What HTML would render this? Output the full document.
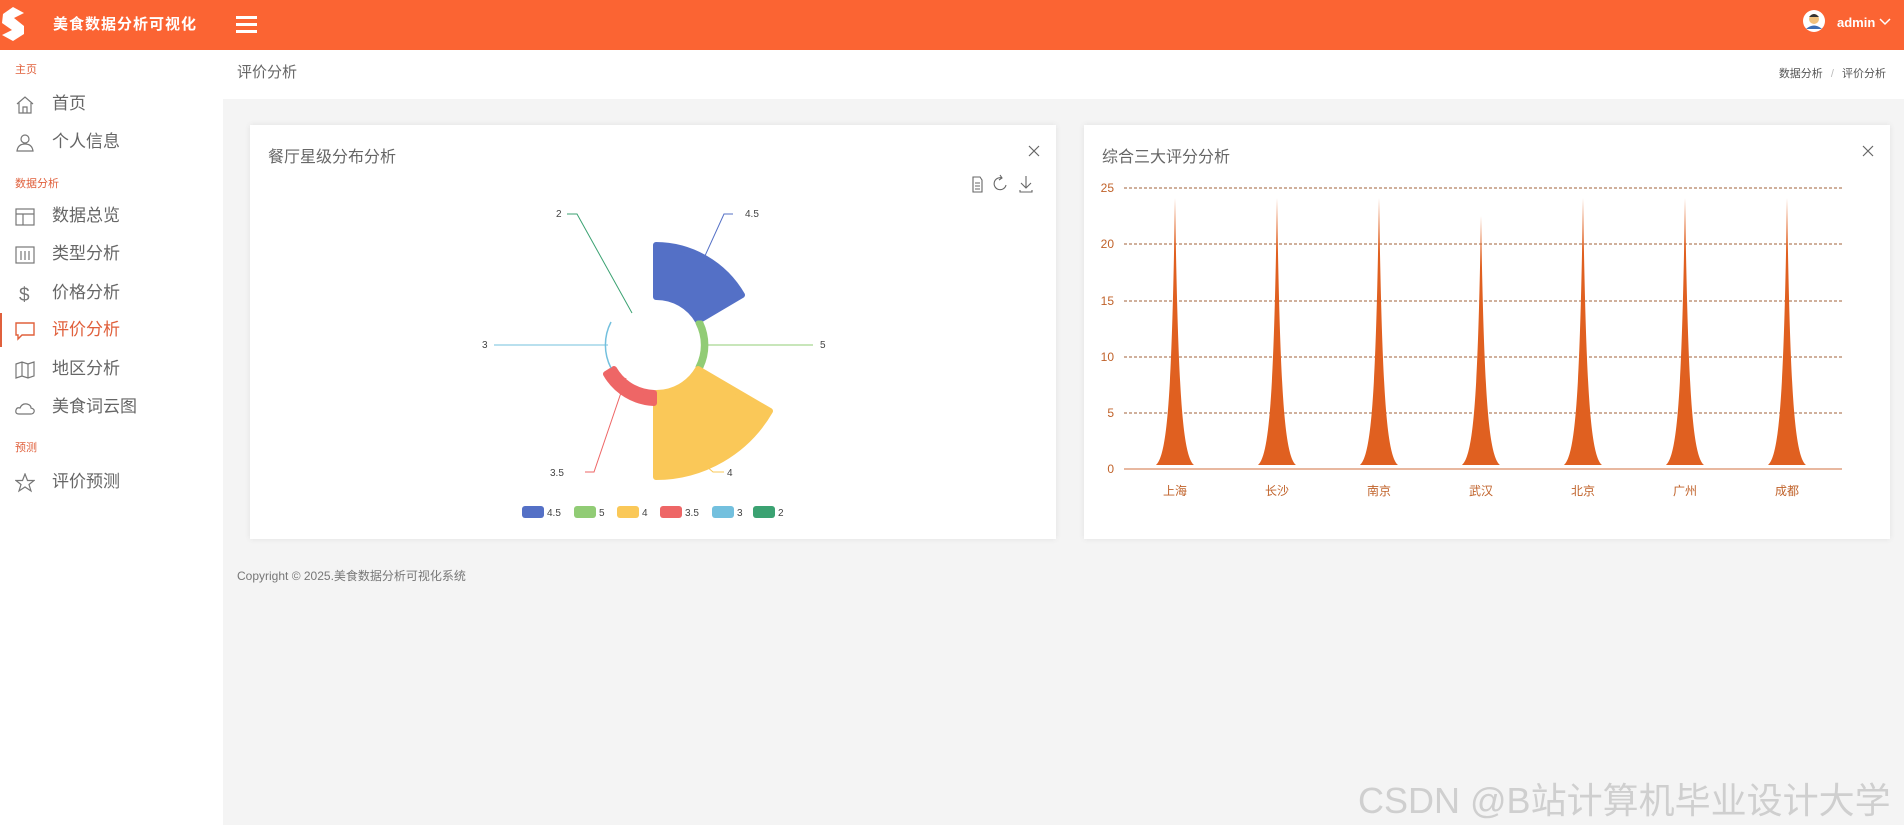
<!DOCTYPE html>
<html><head><meta charset="utf-8"><style>
*{margin:0;padding:0;box-sizing:border-box}
body{width:1904px;height:825px;overflow:hidden;background:#f4f4f4;font-family:"Liberation Sans","Noto Sans CJK SC",sans-serif;position:relative}
.hdr{position:absolute;left:0;top:0;width:1904px;height:50px;background:#fb6433}
.side{position:absolute;left:0;top:50px;width:223px;height:775px;background:#fff}
.sec{position:absolute;left:15px;font-size:11px;color:#e0603c}
.it{position:absolute;left:0;width:223px;height:34px;font-size:17px;color:#666;line-height:34px}
.it span{position:absolute;left:52px}
.it svg{position:absolute;left:15px;top:8px}
.it.act{color:#e0603c;border-left:2px solid #e0603c}
.it.act svg{left:13px}.it.act span{left:50px}
.bc{position:absolute;left:223px;top:50px;width:1681px;height:49px;background:#fff}
.card{position:absolute;top:125px;width:806px;height:414px;background:#fff;box-shadow:0 0 6px rgba(0,0,0,.08)}
.ct{position:absolute;left:18px;top:18px;font-size:16px;color:#666}
.x{position:absolute;right:16px;top:20px}
</style></head><body>
<div class="hdr">
<svg style="position:absolute;left:0;top:4px" width="26" height="40" viewBox="0 0 26 40"><path d="M3 10 L13 3 L24 9 L14 14 L24 22 L24 30 L13 37 L2 31 L12 26 L2 19 Z" fill="#fff"/></svg>
<div style="position:absolute;left:53px;top:13px;color:#fff;font-size:15px;font-weight:bold;letter-spacing:1px">美食数据分析可视化</div>
<div style="position:absolute;left:236px;top:16px;width:21px;height:3px;background:#fff;box-shadow:0 7px 0 #fff,0 14px 0 #fff"></div>
<svg style="position:absolute;left:1803px;top:10px" width="22" height="22"><circle cx="11" cy="11" r="11" fill="#fff"/><circle cx="11" cy="9" r="5" fill="#f1c27d"/><path d="M6 7 Q11 1 16 7" fill="#333"/><path d="M3 19 Q11 12 19 19" fill="#3b6fb6"/></svg>
<div style="position:absolute;left:1837px;top:15px;color:#fff;font-size:13px;font-weight:bold">admin</div>
<svg style="position:absolute;left:1879px;top:18px" width="12" height="8"><path d="M1 1 L6 6 L11 1" stroke="#fff" fill="none" stroke-width="1.5"/></svg>
</div>
<div class="side">
<div class="sec" style="top:11px">主页</div>
<div class="it" style="top:37px"><svg width="20" height="20" fill="none" stroke="#777" stroke-width="1.2"><path d="M2 9 L10 2 L18 9 M4 8 V18 H16 V8 M8 18 V12 H12 V18"/></svg><span>首页</span></div>
<div class="it" style="top:75px"><svg width="20" height="20" fill="none" stroke="#777" stroke-width="1.2"><circle cx="10" cy="6" r="4"/><path d="M2 18 Q3 11 10 11 Q17 11 18 18 Z"/></svg><span>个人信息</span></div>
<div class="sec" style="top:125px">数据分析</div>
<div class="it" style="top:149px"><svg width="20" height="20" fill="none" stroke="#777" stroke-width="1.2"><rect x="1" y="2" width="18" height="16"/><path d="M1 7 H19 M8 7 V18"/></svg><span>数据总览</span></div>
<div class="it" style="top:187px"><svg width="20" height="20" fill="none" stroke="#777" stroke-width="1.2"><rect x="1" y="2" width="18" height="16"/><path d="M6 6 V15 M10 6 V15 M14 6 V15"/></svg><span>类型分析</span></div>
<div class="it" style="top:226px"><svg width="20" height="20"><text x="4" y="17" font-size="19" fill="#777" font-family="Liberation Sans">$</text></svg><span>价格分析</span></div>
<div class="it act" style="top:263px"><svg width="20" height="20" fill="none" stroke="#e0603c" stroke-width="1.4"><path d="M1 2 H19 V14 H7 L3 18 V14 H1 Z"/></svg><span>评价分析</span></div>
<div class="it" style="top:302px"><svg width="20" height="20" fill="none" stroke="#777" stroke-width="1.2"><path d="M1 4 L7 2 L13 4 L19 2 V16 L13 18 L7 16 L1 18 Z M7 2 V16 M13 4 V18"/></svg><span>地区分析</span></div>
<div class="it" style="top:340px"><svg width="20" height="20" fill="none" stroke="#777" stroke-width="1.2"><path d="M4 16 Q0 16 1 12 Q2 9 5 10 Q7 5 12 6 Q16 7 16 10 Q20 11 19 14 Q18 16 16 16 Z"/></svg><span>美食词云图</span></div>
<div class="sec" style="top:389px">预测</div>
<div class="it" style="top:415px"><svg width="20" height="20" fill="none" stroke="#777" stroke-width="1.2"><path d="M10 1 L12.5 7.5 L19 7.5 L14 11.5 L16 18 L10 14 L4 18 L6 11.5 L1 7.5 L7.5 7.5 Z"/></svg><span>评价预测</span></div>
</div>
<div class="bc">
<div style="position:absolute;left:14px;top:11px;font-size:15px;color:#666">评价分析</div>
<div style="position:absolute;right:18px;top:15px;font-size:11px;color:#555">数据分析 <span style="color:#bbb;margin:0 5px">/</span> 评价分析</div>
</div>
<div class="card" style="left:250px">
<div class="ct">餐厅星级分布分析</div><svg class="x" width="12" height="12"><path d="M1 1 L11 11 M11 1 L1 11" stroke="#666" stroke-width="1.2"/></svg>
<svg style="position:absolute;left:0;top:0" width="806" height="414" font-family="Liberation Sans" font-size="10" fill="#444">
<g stroke="#666" fill="none" stroke-width="1.1"><path d="M723 52 H730 L732 55 V67 H723 Z M725 58 H730 M725 61 H730 M725 64 H730"/>
<path d="M752 53 A6 6 0 1 0 756 60 M750 50 L752 53 L749 55"/><path d="M776 51 V63 M771 58 L776 63 L781 58 M770 65 V67 H782 V65"/></g>
<g transform="translate(406,220)" stroke-linejoin="round" stroke-width="6">
<path d="M0 -48 V-100 A100 100 0 0 1 86 -50 L42 -24 A48 48 0 0 0 0 -48 Z" fill="#5470c6" stroke="#5470c6"/>
<path d="M45 -22 A52 52 0 0 1 45 22 L42 22 A48 48 0 0 0 42 -22 Z" fill="#91cc75" stroke="#91cc75" stroke-width="5"/>
<path d="M42 24 L114 66 A132 132 0 0 1 0 132 V48 A48 48 0 0 0 42 24 Z" fill="#fac858" stroke="#fac858"/>
<path d="M-2 48 V58 A58 58 0 0 1 -50 29 L-42 24 A48 48 0 0 0 -2 48 Z" fill="#ee6666" stroke="#ee6666"/>
<path d="M-45 23 A50 50 0 0 1 -45 -23" fill="none" stroke="#73c0de" stroke-width="1.5"/>
</g>
<g fill="none" stroke-width="1">
<path d="M454 133 L474 89 H483" stroke="#5470c6"/><path d="M456 220 H563" stroke="#91cc75"/>
<path d="M455 340 L463 347 H474" stroke="#fac858"/><path d="M376 253 L344 347 H335" stroke="#ee6666"/>
<path d="M358 220 H244" stroke="#73c0de"/><path d="M382 188 L327 89 H317" stroke="#3ba272"/>
</g>
<text x="495" y="92">4.5</text><text x="570" y="223">5</text><text x="477" y="351">4</text><text x="300" y="351">3.5</text><text x="232" y="223">3</text><text x="306" y="92">2</text>
<g>
<rect x="272" y="381" width="22" height="12" rx="3" fill="#5470c6"/><text x="297" y="391">4.5</text>
<rect x="324" y="381" width="22" height="12" rx="3" fill="#91cc75"/><text x="349" y="391">5</text>
<rect x="367" y="381" width="22" height="12" rx="3" fill="#fac858"/><text x="392" y="391">4</text>
<rect x="410" y="381" width="22" height="12" rx="3" fill="#ee6666"/><text x="435" y="391">3.5</text>
<rect x="462" y="381" width="22" height="12" rx="3" fill="#73c0de"/><text x="487" y="391">3</text>
<rect x="503" y="381" width="22" height="12" rx="3" fill="#3ba272"/><text x="528" y="391">2</text>
</g>
</svg>
</div>
<div class="card" style="left:1084px">
<div class="ct">综合三大评分分析</div><svg class="x" width="12" height="12"><path d="M1 1 L11 11 M11 1 L1 11" stroke="#666" stroke-width="1.2"/></svg>
<svg style="position:absolute;left:0;top:0" width="806" height="414" font-family="Liberation Sans" font-size="12" fill="#c0622a">
<g stroke="#a0623a" stroke-dasharray="3,2" stroke-width="1">
<path d="M40 63 H758 M40 119 H758 M40 176 H758 M40 232 H758 M40 288 H758"/></g>
<path d="M40 344 H758" stroke="#e0a080" stroke-width="1.5"/>
<g text-anchor="end"><text x="30" y="67">25</text><text x="30" y="123">20</text><text x="30" y="180">15</text><text x="30" y="236">10</text><text x="30" y="292">5</text><text x="30" y="348">0</text></g>
<g fill="#e06020">
<path d="M72 340 C84 330 88 260 91 73 C94 260 98 330 110 340 Z"/>
<path d="M174 340 C186 330 190 260 193 73 C196 260 200 330 212 340 Z"/>
<path d="M276 340 C288 330 292 260 295 73 C298 260 302 330 314 340 Z"/>
<path d="M378 340 C390 330 394 265 397 91 C400 265 404 330 416 340 Z"/>
<path d="M480 340 C492 330 496 260 499 73 C502 260 506 330 518 340 Z"/>
<path d="M582 340 C594 330 598 260 601 73 C604 260 608 330 620 340 Z"/>
<path d="M684 340 C696 330 700 260 703 73 C706 260 710 330 722 340 Z"/>
</g>
<g text-anchor="middle"><text x="91" y="370">上海</text><text x="193" y="370">长沙</text><text x="295" y="370">南京</text><text x="397" y="370">武汉</text><text x="499" y="370">北京</text><text x="601" y="370">广州</text><text x="703" y="370">成都</text></g>
</svg>
</div>
<div style="position:absolute;left:237px;top:567px;font-size:12px;color:#777">Copyright © 2025.美食数据分析可视化系统</div>
<div style="position:absolute;left:1358px;top:772px;font-size:36px;color:rgba(170,170,170,.5);white-space:nowrap">CSDN @B站计算机毕业设计大学</div>
</body></html>
